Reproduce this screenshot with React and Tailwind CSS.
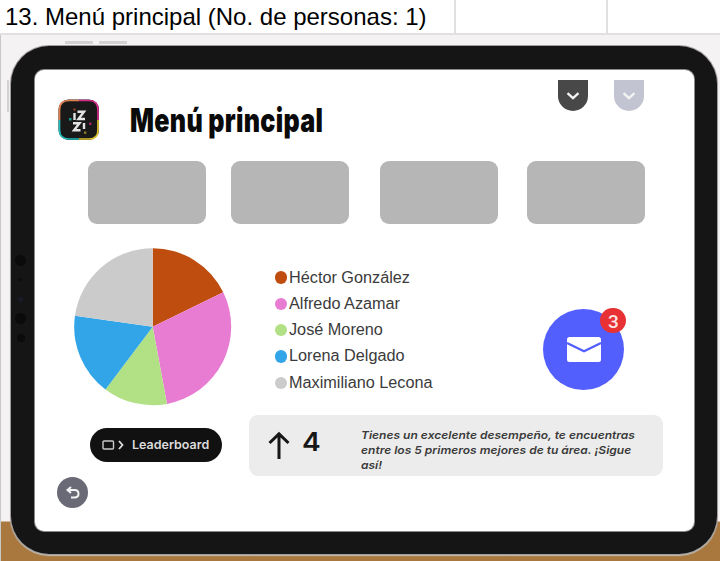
import React from 'react';

const people = [
  { name: 'Héctor González', color: '#bf4d10', start: 0, end: 64 },
  { name: 'Alfredo Azamar', color: '#e87cd3', start: 64, end: 169.5 },
  { name: 'José Moreno', color: '#b1e184', start: 169.5, end: 217 },
  { name: 'Lorena Delgado', color: '#31a5e8', start: 217, end: 278 },
  { name: 'Maximiliano Lecona', color: '#cbcbcb', start: 278, end: 360 },
];

function point(angle) {
  const a = (angle * Math.PI) / 180;
  return `${78.7 + 78.5 * Math.sin(a)} ${78.7 - 78.5 * Math.cos(a)}`;
}

function Pie() {
  return (
    <svg className="ml-[39px] block h-[158px] w-[158px] shrink-0" viewBox="0 0 158 158">
      {people.map((p) => (
        <path
          key={p.name}
          fill={p.color}
          d={`M78.7 78.7 L${point(p.start)} A78.5 78.5 0 0 1 ${point(p.end)} Z`}
        />
      ))}
    </svg>
  );
}

function Logo() {
  return (
    <svg className="mt-[29px] ml-[23px] block h-[42px] w-[42px] shrink-0" viewBox="0 0 42 42">
      <rect x="0.5" y="0.5" width="40.5" height="40.5" rx="10" fill="#191919" />
      <g fill="none" strokeWidth="1.7">
        <path d="M1.5 21V11Q1.5 1.5 11 1.5H21" stroke="#e08050" />
        <path d="M21 1.5H31Q40 1.5 40 11V21" stroke="#d52a8c" />
        <path d="M40 21V31Q40 40 31 40H21" stroke="#dcc02c" />
        <path d="M21 40H11Q1.5 40 1.5 31V21" stroke="#21bcbc" />
        <g stroke="#e4e4e4" strokeWidth="2.4">
          <path d="M16.5 14V21" />
          <path d="M19.5 12.7H26L20.5 20H27" />
          <path d="M15 24.2H21.5L16 31.3H22.5" />
          <path d="M26 24V30" />
        </g>
      </g>
      <path d="M15.5 9.5h2v2h-2z" fill="#a9472f" />
      <path d="M11 19h2.5v2.5H11z" fill="#1a998f" />
      <path d="M31 23.5h2.5V26H31z" fill="#9e2166" />
      <path d="M26 32.5h2.3v2.3H26z" fill="#937f23" />
    </svg>
  );
}

function Bookmark({ className }) {
  return (
    <div className={`flex h-[31px] w-[30px] items-center justify-center rounded-b-[15px] ${className}`}>
      <svg className="mt-px h-[8px] w-[14px]" viewBox="0 0 14 8" fill="none" stroke="#f3f3f3" strokeWidth="2.3">
        <path d="M1.5 1.2L7 6.2L12.5 1.2" />
      </svg>
    </div>
  );
}

function SheetHeader() {
  return (
    <div className="flex h-[35px] shrink-0 border-b-2 border-[#e1e1e1] bg-white font-['Liberation_Sans',sans-serif] text-[24px] leading-[34px] text-black">
      <div className="w-[456px] border-r-2 border-[#e1e1e1] pl-[5px] whitespace-nowrap">13. Menú principal (No. de personas: 1)</div>
      <div className="w-[152px] border-r-2 border-[#e1e1e1]" />
    </div>
  );
}

function Camera() {
  return (
    <div className="flex h-full w-[24px] shrink-0 flex-col items-center pt-[185px] pr-[5px]">
      <div className="h-[11px] w-[11px] rounded-full bg-[#0b0b0b]" />
      <div className="mt-[12px] h-[3px] w-[3px] rounded-full bg-[#0c0c0c]" />
      <div className="mt-[16px] h-[5px] w-[5px] rounded-full bg-[#1a1b2a]" />
      <div className="mt-[11px] h-[11px] w-[11px] rounded-full bg-[#0b0b0b]" />
      <div className="mt-[10px] h-[8px] w-[8px] rounded-full bg-[#0b0b0b]" />
    </div>
  );
}

function Screen() {
  return (
    <div className="flex h-[461px] w-[659px] flex-col rounded-[9px] bg-white ring-1 ring-[#8c8b8b]">
      <div className="flex h-[91px] shrink-0">
        <Logo />
        <h1 className="mt-[29px] ml-[30px] w-[428px] font-[Inter,sans-serif] text-[33px] leading-[42px] font-black tracking-[0.4px] whitespace-nowrap text-[#0a0a0a]">
          <span className="inline-block origin-left scale-x-[0.76]">Menú principal</span>
        </h1>
        <div className="flex gap-[26px] pt-[10px]">
          <Bookmark className="bg-[#484848]" />
          <Bookmark className="bg-[#c2c4d1]" />
        </div>
      </div>
      <div className="flex h-[63px] shrink-0 pl-[53px]">
        <div className="mr-[25px] w-[118px] rounded-[9px] bg-[#b6b6b6]" />
        <div className="mr-[31px] w-[118px] rounded-[9px] bg-[#b6b6b6]" />
        <div className="mr-[29px] w-[118px] rounded-[9px] bg-[#b6b6b6]" />
        <div className="w-[118px] rounded-[9px] bg-[#b6b6b6]" />
      </div>
      <div className="mt-[24px] flex h-[158px] shrink-0">
        <Pie />
        <ul className="mt-[16.5px] ml-[42.5px] w-[268.5px] font-['Liberation_Sans',sans-serif] text-[16px] leading-[26.3px] text-[#3b3b3b]">
          {people.map((p) => (
            <li key={p.name} className="flex items-center gap-[2px] whitespace-nowrap">
              <span className="h-[12.5px] w-[12.5px] rounded-full" style={{ backgroundColor: p.color }} />
              <span className="inline-block origin-left scale-x-[1.015]">{p.name}</span>
            </li>
          ))}
        </ul>
        <div className="relative mt-[61px] flex h-[81px] w-[81px] items-center justify-center rounded-full bg-[#535ffd]">
          <svg className="h-[25px] w-[34px]" viewBox="0 0 34 25">
            <rect width="34" height="25" rx="2.5" fill="#fff" />
            <path d="M0 6L17 14.3L34 6" fill="none" stroke="#535ffd" strokeWidth="2.3" />
          </svg>
          <span className="absolute top-[-1px] left-[57px] flex h-[25px] w-[26px] items-center justify-center rounded-full bg-[#e83134] pt-px pl-px font-[Roboto,sans-serif] text-[19px] leading-none font-medium text-[#fbe6e6]">
            3
          </span>
        </div>
      </div>
      <div className="mt-[9px] flex h-[61px] shrink-0 pl-[55px]">
        <div className="mt-[13px] mr-[27px] flex h-[34px] w-[132px] items-center rounded-full bg-[#111] pl-[12px] text-[#dcdcdc]">
          <svg className="h-[12px] w-[24px] shrink-0" viewBox="0 0 24 12" fill="none" stroke="#c9c9c9" strokeWidth="1.4">
            <rect x="1" y="2" width="10.5" height="8" rx="1" />
            <path d="M17 2L20.5 6L17 10" stroke="#ddd" strokeWidth="1.8" />
          </svg>
          <span className="ml-[6px] inline-block origin-left scale-x-[1.04] font-[Inter,sans-serif] text-[12px] font-semibold">Leaderboard</span>
        </div>
        <div className="flex w-[414px] rounded-[9px] bg-[#ececec] text-[#3a3a3a]">
          <svg className="mt-[16px] ml-[19px] h-[28px] w-[22px]" viewBox="0 0 22 28" fill="none" stroke="#171717" strokeWidth="3">
            <path d="M11 28V3M1.5 12L11 2.8L20.5 12" />
          </svg>
          <span className="mt-[12px] ml-[12px] w-[59px] font-[Inter,sans-serif] text-[26px] leading-[30px] font-semibold text-[#171717]">
            <span className="inline-block origin-left scale-x-[1.08]">4</span>
          </span>
          <p className="mt-[13px] origin-left scale-x-[1.092] self-start font-[Inter,sans-serif] text-[11px] leading-[15px] font-semibold whitespace-nowrap italic">
            Tienes un excelente desempeño, te encuentras
            <br />
            entre los 5 primeros mejores de tu área. ¡Sigue
            <br />
            así!
          </p>
        </div>
      </div>
      <div className="mt-[1px] ml-[22px] flex h-[31px] w-[31px] items-center justify-center rounded-full bg-[#696a76]">
        <svg className="h-[14px] w-[16px]" viewBox="0 0 16 14" fill="none" stroke="#f4f4f4" strokeWidth="2">
          <path d="M6 1L2.5 4L6 7M3 4H9.5Q13.5 4 13.5 7.8Q13.5 11.5 9.5 11.5H6" />
        </svg>
      </div>
    </div>
  );
}

export default function App() {
  return (
    <main className="flex h-[561px] w-[720px] flex-col overflow-hidden bg-white">
      <SheetHeader />
      <div className="flex h-[526px] shrink-0 border-l border-[#c9c9c9] bg-linear-to-b from-[#f5f2f3] from-[486px] to-[#a8783e] to-[487px] pt-[11px] pl-[10px]">
        <div className="relative flex h-[508px] w-[706px] shrink-0 rounded-[38px] bg-[#151515] pt-[24px] shadow-[0_1px_1px_1px_#c4bcb5] ring-1 ring-[#a09e9d]">
          <div className="absolute top-[-5px] left-[54px] h-[3px] w-[28px] bg-[#d3d1d1]" />
          <div className="absolute top-[-5px] left-[88px] h-[3px] w-[28px] bg-[#d3d1d1]" />
          <div className="absolute top-[34px] left-[-4px] h-[32px] w-[2px] bg-[#d3d1d1]" />
          <Camera />
          <Screen />
        </div>
      </div>
    </main>
  );
}
